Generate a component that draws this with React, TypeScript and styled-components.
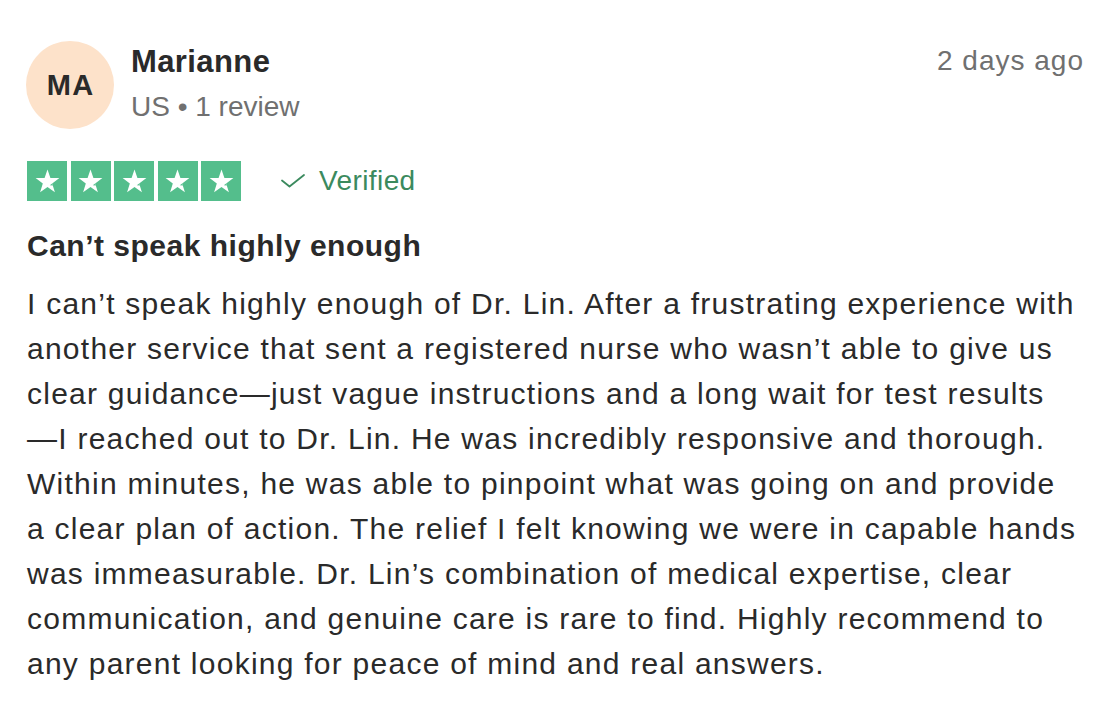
import React from "react";
import styled, { createGlobalStyle } from "styled-components";

const Global = createGlobalStyle`
  html, body { margin: 0; padding: 0; background: #ffffff; }
  body { font-family: "Liberation Sans", Arial, Helvetica, sans-serif; -webkit-font-smoothing: antialiased; }
`;

const Card = styled.article`
  padding: 41px 28px 0 26px;
  color: #2a2a2a;
`;

const Header = styled.header`
  display: flex;
  align-items: flex-start;
`;

const Avatar = styled.div`
  flex: none;
  width: 88px;
  height: 88px;
  border-radius: 50%;
  background: #fde2ca;
  display: flex;
  align-items: center;
  justify-content: center;
  font-weight: 700;
  font-size: 29px;
  letter-spacing: 1.5px;
  padding-left: 1.5px;
  box-sizing: border-box;
  color: #2a2a2a;
`;

const Info = styled.div`
  flex: 1;
  margin-left: 17px;
  display: flex;
  flex-direction: column;
`;

const Name = styled.div`
  font-size: 31px;
  line-height: 41px;
  font-weight: 700;
  letter-spacing: 0.4px;
`;

const Meta = styled.div`
  margin-top: 5px;
  font-size: 28px;
  line-height: 40px;
  color: #707070;
`;

const DateText = styled.time`
  font-size: 28px;
  line-height: 40px;
  letter-spacing: 1px;
  color: #707070;
`;

const RatingRow = styled.div`
  margin-top: 32px;
  margin-left: 1px;
  display: flex;
  align-items: center;
  height: 40px;
`;

const Stars = styled.div`
  display: flex;
  gap: 3.5px;
`;

const StarBox = styled.span`
  width: 40px;
  height: 40px;
  background: #54be8c;
  display: flex;
  align-items: center;
  justify-content: center;
`;

const Verified = styled.span`
  margin-left: 40px;
  display: flex;
  align-items: center;
  gap: 14px;
  color: #3b8a5e;
  font-size: 28px;
  line-height: 40px;
  letter-spacing: 0.4px;
`;

const Title = styled.h2`
  margin: 25px 0 0 1px;
  font-size: 30px;
  line-height: 40px;
  font-weight: 700;
  letter-spacing: 0.5px;
`;

const Body = styled.p`
  margin: 15px 0 0 1px;
  font-size: 30px;
  line-height: 45px;
  letter-spacing: 1.25px;
  white-space: nowrap;
  color: #2a2a2a;
`;

const Star = () => (
  <svg width="25" height="24" viewBox="0 0 24 23" aria-hidden="true">
    <polygon
      fill="#ffffff"
      points="12,0.5 14.8,8.6 23.4,8.7 16.5,13.9 19.1,22.2 12,17.2 4.9,22.2 7.5,13.9 0.6,8.7 9.2,8.6"
    />
    <polygon fill="#54be8c" points="14.2,15.6 16.5,13.9 17.1,15.8" />
  </svg>
);

const Check = () => (
  <svg width="24" height="14" viewBox="0 0 24 14" aria-hidden="true">
    <polyline
      points="1,6.5 8.5,12.5 23,1"
      fill="none"
      stroke="#3b8a5e"
      strokeWidth="1.8"
      strokeLinecap="round"
      strokeLinejoin="round"
    />
  </svg>
);

const lines = [
  "I can’t speak highly enough of Dr. Lin. After a frustrating experience with",
  "another service that sent a registered nurse who wasn’t able to give us",
  "clear guidance—just vague instructions and a long wait for test results",
  "—I reached out to Dr. Lin. He was incredibly responsive and thorough.",
  "Within minutes, he was able to pinpoint what was going on and provide",
  "a clear plan of action. The relief I felt knowing we were in capable hands",
  "was immeasurable. Dr. Lin’s combination of medical expertise, clear",
  "communication, and genuine care is rare to find. Highly recommend to",
  "any parent looking for peace of mind and real answers.",
];

export default function App() {
  return (
    <>
      <Global />
      <Card>
        <Header>
          <Avatar>MA</Avatar>
          <Info>
            <Name>Marianne</Name>
            <Meta>US • 1 review</Meta>
          </Info>
          <DateText>2 days ago</DateText>
        </Header>
        <RatingRow>
          <Stars>
            {[0, 1, 2, 3, 4].map((i) => (
              <StarBox key={i}>
                <Star />
              </StarBox>
            ))}
          </Stars>
          <Verified>
            <Check />
            Verified
          </Verified>
        </RatingRow>
        <Title>Can’t speak highly enough</Title>
        <Body>
          {lines.map((l, i) => (
            <React.Fragment key={i}>
              {l}
              {i < lines.length - 1 && <br />}
            </React.Fragment>
          ))}
        </Body>
      </Card>
    </>
  );
}
